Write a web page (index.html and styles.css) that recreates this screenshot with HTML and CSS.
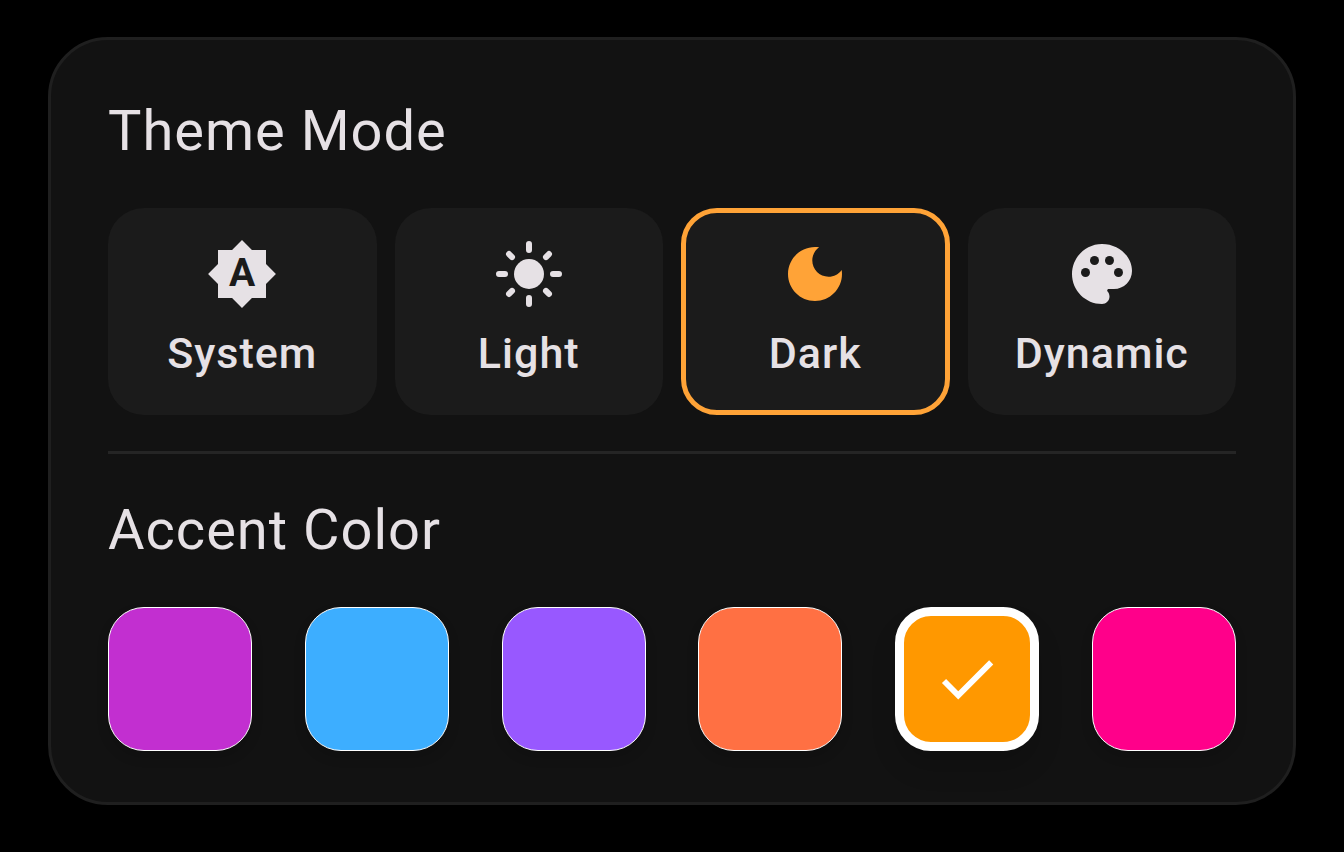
FILE: index.html
```html
<!DOCTYPE html>
<html lang="en">
  <head>
    <meta charset="utf-8" />
    <title>Appearance</title>
    <link rel="stylesheet" href="styles.css" />
  </head>
  <body>
    <main class="card">
      <section>
        <h2 class="card-title">Theme Mode</h2>
        <div class="modes">
          <button type="button" class="mode">
            <svg class="icon" viewBox="0 0 24 24" aria-hidden="true">
              <path d="M20 8.69V4h-4.69L12 .69 8.69 4H4v4.69L.69 12 4 15.31V20h4.69L12 23.31 15.31 20H20v-4.69L23.31 12z" />
              <text class="icon-letter" x="12" y="16">A</text>
            </svg>
            <span class="mode-label">System</span>
          </button>
          <button type="button" class="mode">
            <svg class="icon" viewBox="0 0 24 24" aria-hidden="true">
              <circle cx="12" cy="12" r="5" />
              <path class="rays" d="M12 2v2M12 20v2M2 12h2M20 12h2M5.34 5.34l1 1M17.66 17.66l1 1M18.66 5.34l-1 1M6.34 17.66l-1 1" />
            </svg>
            <span class="mode-label">Light</span>
          </button>
          <button type="button" class="mode mode-selected" aria-pressed="true">
            <svg class="icon" viewBox="0 0 24 24" aria-hidden="true">
              <path d="M12 3c-4.97 0-9 4.03-9 9s4.03 9 9 9 9-4.03 9-9c0-.46-.04-.92-.1-1.36-.98 1.37-2.58 2.26-4.4 2.26-2.98 0-5.4-2.42-5.4-5.4 0-1.81.89-3.42 2.26-4.4C12.92 3.04 12.46 3 12 3z" />
            </svg>
            <span class="mode-label">Dark</span>
          </button>
          <button type="button" class="mode">
            <svg class="icon" viewBox="0 0 24 24" aria-hidden="true">
              <path d="M12 2C6.49 2 2 6.49 2 12s4.49 10 10 10c1.38 0 2.5-1.12 2.5-2.5 0-.61-.23-1.2-.64-1.67-.08-.1-.13-.21-.13-.33 0-.28.22-.5.5-.5H16c3.31 0 6-2.69 6-6 0-4.96-4.49-9-10-9z" />
              <g class="holes">
                <circle cx="6.5" cy="11.5" r="1.5" />
                <circle cx="9.5" cy="7.5" r="1.5" />
                <circle cx="14.5" cy="7.5" r="1.5" />
                <circle cx="17.5" cy="11.5" r="1.5" />
              </g>
            </svg>
            <span class="mode-label">Dynamic</span>
          </button>
        </div>
      </section>

      <hr class="divider" />

      <section>
        <h2 class="card-title">Accent Color</h2>
        <div class="swatches">
          <button type="button" class="swatch magenta" aria-label="Magenta"></button>
          <button type="button" class="swatch blue" aria-label="Blue"></button>
          <button type="button" class="swatch violet" aria-label="Violet"></button>
          <button type="button" class="swatch coral" aria-label="Coral"></button>
          <button type="button" class="swatch orange swatch-selected" aria-label="Orange" aria-pressed="true">
            <svg class="icon" viewBox="0 0 24 24" aria-hidden="true">
              <path d="M9 16.17L4.83 12l-1.42 1.41L9 19 21 7l-1.41-1.41z" />
            </svg>
          </button>
          <button type="button" class="swatch pink" aria-label="Pink"></button>
        </div>
      </section>
    </main>
  </body>
</html>
```
FILE: styles.css
```css
* {
  box-sizing: border-box;
}

body {
  margin: 0;
  padding: 37px 48px;
  background: #000;
  color: #e6e1e5;
  font-family: Roboto, sans-serif;
}

.card {
  padding: 57px 57px 51px;
  background: #121212;
  border: 3px solid #1f1f1f;
  border-radius: 60px;
}

.card-title {
  margin: 0 0 43px;
  font-size: 56px;
  font-weight: 400;
  line-height: 68px;
  letter-spacing: 1px;
}

.modes {
  display: grid;
  grid-template-columns: repeat(4, 1fr);
  gap: 18px;
}

.mode {
  display: flex;
  flex-direction: column;
  align-items: center;
  gap: 12px;
  padding: 25px;
  background: #1b1b1b;
  border: 5px solid transparent;
  border-radius: 36px;
  color: inherit;
  font-family: inherit;
  cursor: pointer;
}

.mode-selected {
  border-color: #ffa337;
}

.mode-selected .icon {
  fill: #ffa337;
}

.mode-label {
  font-size: 43px;
  font-weight: 500;
  line-height: 63px;
  letter-spacing: 1px;
}

.icon {
  display: block;
  width: 72px;
  height: 72px;
  fill: #e6e1e5;
}

.icon-letter {
  fill: #1b1b1b;
  font-size: 13px;
  font-weight: 700;
  text-anchor: middle;
}

.rays {
  stroke: #e6e1e5;
  stroke-width: 2;
  stroke-linecap: round;
}

.holes {
  fill: #1b1b1b;
}

.divider {
  height: 3px;
  margin: 36px 0 42px;
  background: #252525;
  border: none;
}

.swatches {
  display: flex;
  justify-content: space-between;
}

.swatch {
  display: flex;
  align-items: center;
  justify-content: center;
  width: 144px;
  height: 144px;
  padding: 0;
  border: 1px solid #fff;
  border-radius: 36px;
  box-shadow: 0 6px 12px rgba(0, 0, 0, 0.15);
  cursor: pointer;
}

.swatch-selected {
  border-width: 9px;
  box-shadow: 0 18px 24px rgba(0, 0, 0, 0.15);
}

.swatch-selected .icon {
  width: 70px;
  height: 70px;
  fill: #fff;
}

.magenta {
  background: #c22fd0;
}

.blue {
  background: #3daeff;
}

.violet {
  background: #9858ff;
}

.coral {
  background: #ff7043;
}

.orange {
  background: #ff9800;
}

.pink {
  background: #ff008a;
}
```
